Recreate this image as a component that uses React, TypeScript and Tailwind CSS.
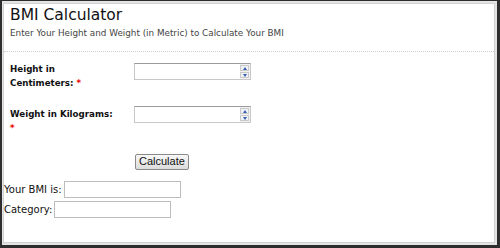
import React from "react";

function NumField() {
  return (
    <div className="flex h-[17px] w-[117px] border border-[#c8c8c8] border-t-[#9a9a9a] bg-white">
      <div className="flex-1" />
      <div className="flex w-[10px] flex-col gap-px bg-[#f2f2f2] py-px pr-px">
        <div className="flex flex-1 items-center justify-center border border-[#c9c9c9] bg-[#eef1f6]">
          <div className="h-0 w-0 border-x-[2px] border-b-[3px] border-x-transparent border-b-[#3a5fb0]" />
        </div>
        <div className="flex flex-1 items-center justify-center border border-[#c9c9c9] bg-[#eef1f6]">
          <div className="h-0 w-0 border-x-[2px] border-t-[3px] border-x-transparent border-t-[#3a5fb0]" />
        </div>
      </div>
    </div>
  );
}

export default function App() {
  const font = { fontFamily: '"DejaVu Sans", Verdana, sans-serif' };
  return (
    <div className="h-[248px] w-[500px] bg-[#2e2e2e] pb-[3px] pl-[2px] pr-[3px] pt-px" style={font}>
      <div className="h-full bg-[#e4e4e4] pb-[2px] pl-px pr-[2px] pt-[2px]">
        <div className="flex h-full flex-col border border-[#d2d2d2] bg-white">
          <div className="pl-[6px] pt-px">
            <div className="text-[15.5px] leading-[20px] text-[#111]">BMI Calculator</div>
            <div className="mt-[2px] text-[8.8px] leading-[12px] text-[#444]">
              Enter Your Height and Weight (in Metric) to Calculate Your BMI
            </div>
          </div>
          <div className="mt-[12px] border-t border-dotted border-[#cfcfcf]" />
          <div className="pl-[6px] pt-[10px]">
            <div className="flex items-start">
              <div className="w-[124px] text-[8.7px] font-bold leading-[14px] text-[#111]">
                Height in
                <br />
                Centimeters: <span className="text-[#e00]">*</span>
              </div>
              <div className="mt-px">
                <NumField />
              </div>
            </div>
            <div className="mt-[16px] flex items-start">
              <div className="w-[124px] pt-px text-[8.7px] font-bold leading-[14px] text-[#111]">
                Weight in Kilograms:
                <br />
                <span className="text-[#e00]">*</span>
              </div>
              <NumField />
            </div>
            <div className="mt-[13px] pl-[125px]">
              <button
                className="h-[16px] rounded-[2px] border border-[#8a8a8a] bg-gradient-to-b from-[#f8f8f8] to-[#dcdcdc] px-[3px] text-[11px] leading-[13px] text-[#111]"
                style={{ fontFamily: '"Liberation Sans", Arial, sans-serif' }}
              >
                Calculate
              </button>
            </div>
          </div>
          <div className="mt-[9px] flex flex-col gap-[3px] text-[10px] text-[#111]">
            <div className="flex items-center">
              <span className="leading-[17px]">Your BMI is:</span>
              <div className="ml-[2px] h-[17px] w-[117px] border border-[#bdbdbd] bg-white" />
            </div>
            <div className="flex items-center">
              <span className="leading-[17px]">Category:</span>
              <div className="ml-[2px] h-[17px] w-[117px] border border-[#bdbdbd] bg-white" />
            </div>
          </div>
        </div>
      </div>
    </div>
  );
}
